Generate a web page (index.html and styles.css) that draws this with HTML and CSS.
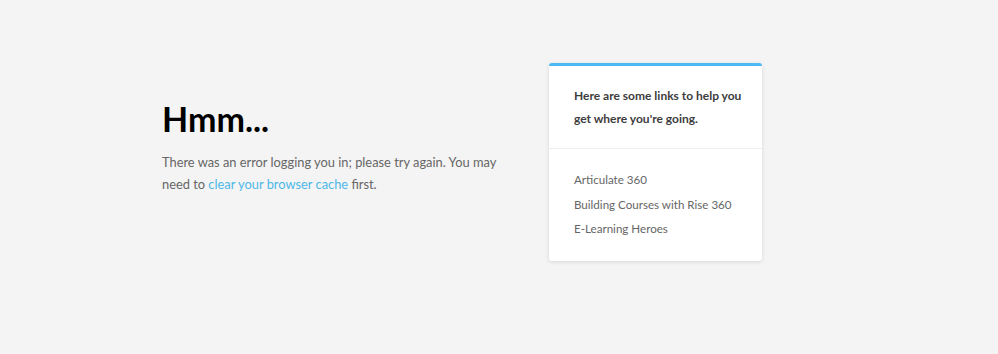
FILE: index.html
```html
<!DOCTYPE html>
<html lang="en">
<head>
    <meta charset="UTF-8">
    <meta name="viewport" content="width=device-width, initial-scale=1.0">
    <title>Login error</title>
    <link rel="stylesheet" href="styles.css">
</head>
<body>
    <div class="page">
        <div class="message">
            <h1>Hmm...</h1>
            <p>There was an error logging you in; please try again. You may need to <a class="bluelink" href="#">clear your browser cache</a> first.</p>
        </div>
        <div class="card">
            <div class="card-head">Here are some links to help you get where you're going.</div>
            <div class="card-links">
                <a href="#">Articulate 360</a>
                <a href="#">Building Courses with Rise 360</a>
                <a href="#">E-Learning Heroes</a>
            </div>
        </div>
    </div>
</body>
</html>
```

FILE: styles.css
```css
body {
    margin: 0;
    font-family: Lato, "Open Sans", sans-serif;
    background-color: #f4f4f4;
    color: #666;
}

.page {
    display: flex;
    align-items: flex-start;
    padding: 63px 0 0 162px;
    height: 354px;
    box-sizing: border-box;
}

.message {
    width: 350px;
    margin-top: 36px;
}

h1 {
    margin: 0 0 12px;
    font-size: 34px;
    line-height: 40px;
    font-weight: 700;
    color: #000;
}

p {
    margin: 0;
    font-size: 12.85px;
    line-height: 22px;
}

.bluelink {
    color: #4db8e8;
    text-decoration: none;
}

.card {
    width: 213px;
    margin-left: 37px;
    background-color: #fff;
    border-top: 3px solid #4cb9f4;
    border-radius: 3px;
    box-shadow: 0px 1px 4px rgba(0, 0, 0, 0.12);
}

.card-head {
    padding: 18px 15px 18px 25px;
    font-size: 12px;
    line-height: 23px;
    font-weight: 700;
    color: #3d3d3d;
    border-bottom: 1px solid #eee;
}

.card-links {
    padding: 19px 15px 19px 25px;
}

.card-links a {
    display: block;
    font-size: 11.6px;
    line-height: 24.5px;
    color: #666;
    text-decoration: none;
}
```
